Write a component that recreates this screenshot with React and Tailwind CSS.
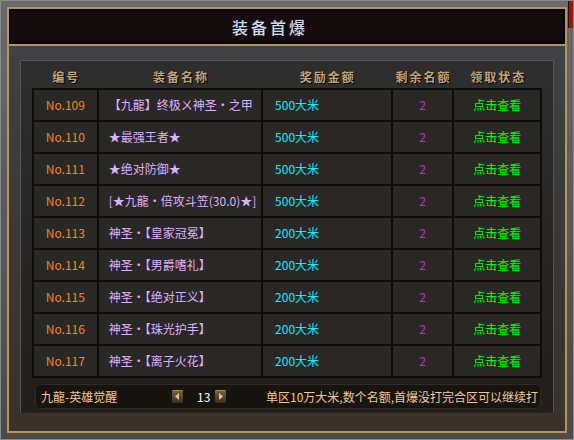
const ROWS = [
  { no: 'No.109', name: '【九龍】终极ㄨ神圣・之甲', amount: '500大米' },
  { no: 'No.110', name: '★最强王者★', amount: '500大米' },
  { no: 'No.111', name: '★绝对防御★', amount: '500大米' },
  { no: 'No.112', name: '[★九龍・倍攻斗笠(30.0)★]', amount: '500大米' },
  { no: 'No.113', name: '神圣・【皇家冠冕】', amount: '200大米' },
  { no: 'No.114', name: '神圣・【男爵嗜礼】', amount: '200大米' },
  { no: 'No.115', name: '神圣・【绝对正义】', amount: '200大米' },
  { no: 'No.116', name: '神圣・【珠光护手】', amount: '200大米' },
  { no: 'No.117', name: '神圣・【离子火花】', amount: '200大米' },
];

const HEADERS = [
  { label: '编号', w: 'w-[65px]' },
  { label: '装备名称', w: 'w-[165px]' },
  { label: '奖励金额', w: 'w-[130px]' },
  { label: '剩余名额', w: 'w-[62px]' },
  { label: '领取状态', w: 'w-[88px]' },
];

function ArrowButton({ dir }) {
  return (
    <div className="w-[13px] h-[15px] rounded-[2px] border border-[#15110b] bg-gradient-to-b from-[#7a6440] to-[#3e3020] flex items-center justify-center shadow-[inset_0_1px_0_#a08a5a]">
      <svg width="5" height="7" viewBox="0 0 5 7">
        {dir === 'left' ? (
          <path d="M4 0 L0 3.5 L4 7 Z" fill="#d8c490" />
        ) : (
          <path d="M1 0 L5 3.5 L1 7 Z" fill="#d8c490" />
        )}
      </svg>
    </div>
  );
}

export default function App() {
  return (
    <div
      className="relative w-[574px] h-[440px] bg-gradient-to-b from-[#6a6a6c] to-[#4a4a4c] p-[6px] border border-[#8a8a8a]"
      style={{ fontFamily: '"Noto Sans CJK SC", "Liberation Sans", sans-serif' }}
    >
      {/* red ornament top right */}
      <div className="absolute right-0 top-0 w-[5px] h-[27px] bg-[#8c1c0c] border-l border-[#2a0a04]" />

      <div className="flex flex-col h-full border-2 border-[#b8955c] bg-[#3c3d40]">
        {/* title bar */}
        <div className="h-[35px] bg-[#140c0c] border-2 border-[#060303] flex items-center justify-center pr-[34px]">
          <span className="text-[16px] font-medium tracking-[3px] text-[#d4d9e6] [text-shadow:1px_1px_0_#000,0_0_2px_#3a4a70]">
            装备首爆
          </span>
        </div>
        <div className="h-[2px] bg-[#b8955c]" />

        {/* body */}
        <div className="flex-1 bg-gradient-to-b from-[#404246] via-[#3a3835] to-[#3a322a] pt-[14px] pl-[11px] pr-[11px] pb-[18px]">
          <div className="h-full border border-[#55555a] border-b-[#2a2520] bg-gradient-to-b from-[#2e2e2e] to-[#221e1a] px-[11px] flex flex-col">
            {/* header */}
            <div className="h-[27px] pt-[4px] flex items-center">
              {HEADERS.map((h, i) => (
                <div
                  key={h.label}
                  className={`${h.w} ${i === 0 ? 'ml-[2px]' : ''} text-center text-[12px] font-bold tracking-[2px] text-[#c4a574] [text-shadow:1px_1px_0_#000]`}
                >
                  {h.label}
                </div>
              ))}
            </div>

            {/* table */}
            <div className="border-t-2 border-l-2 border-[#0e0d0c]">
              {ROWS.map((r) => (
                <div key={r.no} className="flex h-[32px] border-b-2 border-[#0e0d0c] bg-[#2a2825] text-[12px] leading-none">
                  <div className="w-[65px] border-r-2 border-[#0e0d0c] flex items-center justify-center text-[#ff8410]">
                    {r.no}
                  </div>
                  <div className="w-[165px] border-r-2 border-[#0e0d0c] flex items-center pl-[10px] text-[#dcb0ff] whitespace-nowrap overflow-hidden">
                    {r.name}
                  </div>
                  <div className="w-[130px] border-r-2 border-[#0e0d0c] flex items-center pl-[12px] text-[#00f0ff]">
                    {r.amount}
                  </div>
                  <div className="w-[62px] border-r-2 border-[#0e0d0c] flex items-center justify-center text-[#ff00ff]">
                    2
                  </div>
                  <div className="w-[88px] border-r-2 border-[#0e0d0c] flex items-center justify-center text-[#00ff00]">
                    点击查看
                  </div>
                </div>
              ))}
            </div>

            {/* footer */}
            <div className="mt-[6px] ml-[3px] mr-[1px] h-[25px] rounded-[5px] bg-[#17140f] border border-[#2e2a24] flex items-center pl-[5px] pr-[2px] text-[12px] text-[#f2c890] whitespace-nowrap">
              <span className="w-[130px]">九龍-英雄觉醒</span>
              <div className="flex items-center">
                <ArrowButton dir="left" />
                <span className="ml-[13px] mr-[4px] text-white">13</span>
                <ArrowButton dir="right" />
              </div>
              <span className="ml-auto">单区10万大米,数个名额,首爆没打完合区可以继续打</span>
            </div>
          </div>
        </div>
      </div>
    </div>
  );
}
